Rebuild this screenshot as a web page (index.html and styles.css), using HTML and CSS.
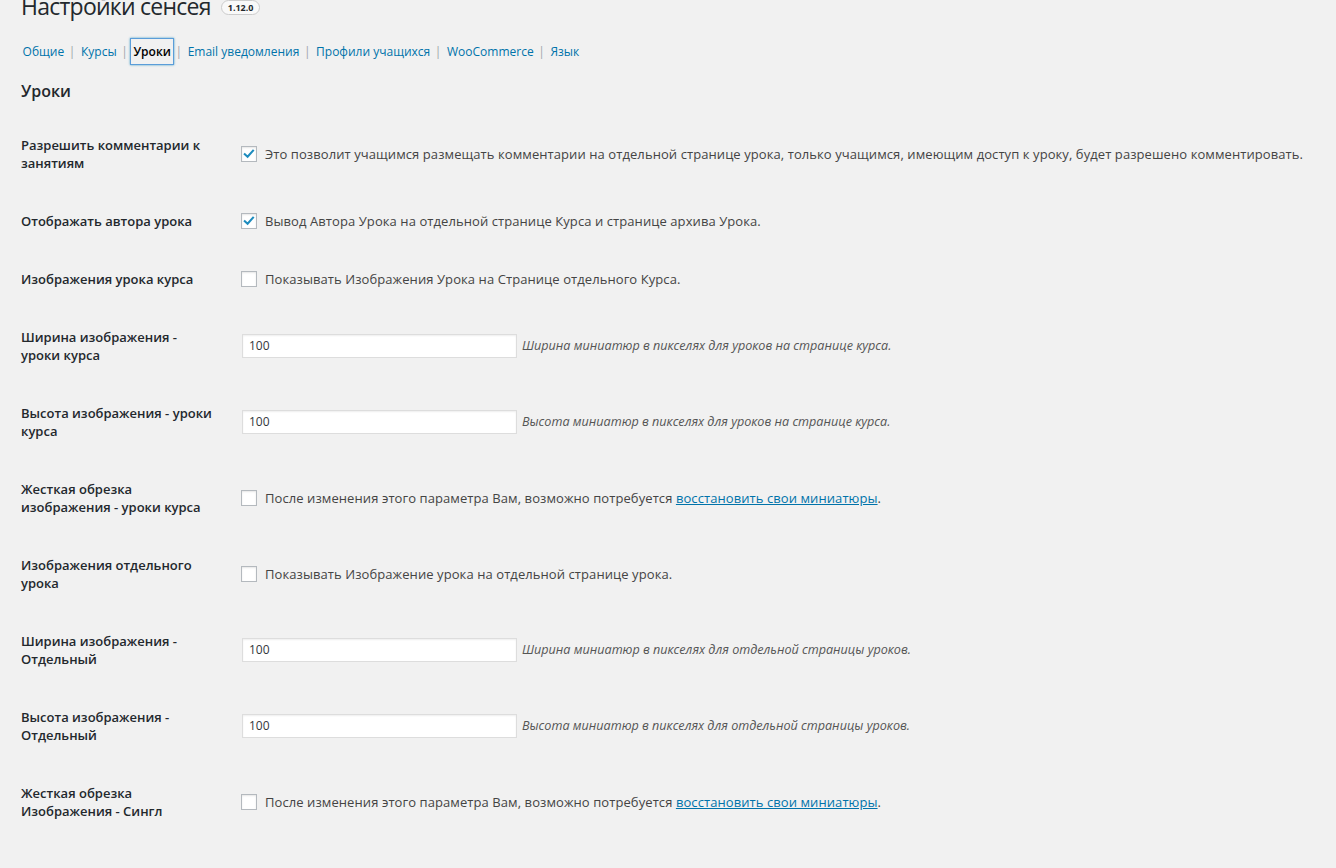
FILE: index.html
```html
<!DOCTYPE html>
<html lang="ru">
<head>
<meta charset="utf-8">
<title>Настройки сенсея</title>
<link rel="stylesheet" href="styles.css">
</head>
<body>
<div class="wrap">
  <h1 class="title">Настройки сенсея <span class="version">1.12.0</span></h1>
  <ul class="tabs">
    <li><a href="#">Общие</a><span class="sep">|</span></li>
    <li><a href="#">Курсы</a><span class="sep">|</span></li>
    <li><a href="#" class="current">Уроки</a><span class="sep">|</span></li>
    <li><a href="#">Email уведомления</a><span class="sep">|</span></li>
    <li><a href="#">Профили учащихся</a><span class="sep">|</span></li>
    <li><a href="#">WooCommerce</a><span class="sep">|</span></li>
    <li><a href="#">Язык</a></li>
  </ul>
  <h2 class="section">Уроки</h2>
  <table class="form-table">
    <tr>
      <th>Разрешить комментарии к<br>занятиям</th>
      <td><label class="check"><span class="cb checked"><svg viewBox="0 0 16 16"><polyline points="3.2,8.2 6.4,11.2 12.6,4.2"/></svg></span>Это позволит учащимся размещать комментарии на отдельной странице урока, только учащимся, имеющим доступ к уроку, будет разрешено комментировать.</label></td>
    </tr>
    <tr>
      <th>Отображать автора урока</th>
      <td><label class="check"><span class="cb checked"><svg viewBox="0 0 16 16"><polyline points="3.2,8.2 6.4,11.2 12.6,4.2"/></svg></span>Вывод Автора Урока на отдельной странице Курса и странице архива Урока.</label></td>
    </tr>
    <tr>
      <th>Изображения урока курса</th>
      <td><label class="check"><span class="cb"></span>Показывать Изображения Урока на Странице отдельного Курса.</label></td>
    </tr>
    <tr>
      <th>Ширина изображения -<br>уроки курса</th>
      <td><div class="field"><span class="input">100</span><span class="desc">Ширина миниатюр в пикселях для уроков на странице курса.</span></div></td>
    </tr>
    <tr>
      <th>Высота изображения - уроки<br>курса</th>
      <td><div class="field"><span class="input">100</span><span class="desc">Высота миниатюр в пикселях для уроков на странице курса.</span></div></td>
    </tr>
    <tr>
      <th>Жесткая обрезка<br>изображения - уроки курса</th>
      <td><label class="check"><span class="cb"></span>После изменения этого параметра Вам, возможно потребуется&nbsp;<a href="#">восстановить свои миниатюры</a>.</label></td>
    </tr>
    <tr>
      <th>Изображения отдельного<br>урока</th>
      <td><label class="check"><span class="cb"></span>Показывать Изображение урока на отдельной странице урока.</label></td>
    </tr>
    <tr>
      <th>Ширина изображения -<br>Отдельный</th>
      <td><div class="field"><span class="input">100</span><span class="desc">Ширина миниатюр в пикселях для отдельной страницы уроков.</span></div></td>
    </tr>
    <tr>
      <th>Высота изображения -<br>Отдельный</th>
      <td><div class="field"><span class="input">100</span><span class="desc">Высота миниатюр в пикселях для отдельной страницы уроков.</span></div></td>
    </tr>
    <tr>
      <th>Жесткая обрезка<br>Изображения - Сингл</th>
      <td><label class="check"><span class="cb"></span>После изменения этого параметра Вам, возможно потребуется&nbsp;<a href="#">восстановить свои миниатюры</a>.</label></td>
    </tr>
  </table>
</div>
</body>
</html>
```

FILE: styles.css
```css
html, body {
  margin: 0;
  padding: 0;
  background: #f1f1f1;
}
body {
  font-family: "Open Sans", "Liberation Sans", sans-serif;
  font-size: 13px;
  color: #444;
  overflow: hidden;
  height: 868px;
}
.wrap {
  padding: 0 20px 0 21px;
}
.title {
  margin: -9px 0 0 0;
  height: 30px;
  line-height: 30px;
  font-size: 23px;
  font-weight: 400;
  letter-spacing: -0.75px;
  color: #23282d;
  display: flex;
  align-items: center;
  gap: 10px;
  white-space: nowrap;
}
.version {
  display: inline-block;
  font-size: 9px;
  font-weight: 700;
  letter-spacing: 0;
  line-height: 13px;
  padding: 0 6px;
  border: 1px solid #ccc;
  border-radius: 8px;
  background: #f9f9f9;
  color: #23282d;
  position: relative;
  top: 1px;
}
.tabs {
  list-style: none;
  margin: 17px 0 0 -1px;
  padding: 0;
  display: flex;
  height: 26px;
  align-items: center;
  white-space: nowrap;
  font-size: 12px;
}
.tabs li {
  display: flex;
  align-items: center;
}
.tabs a {
  color: #0073aa;
  text-decoration: none;
  padding: 3px 2.6px;
  line-height: 19px;
}
.tabs a.current {
  color: #000;
  font-weight: 600;
  box-shadow: 0 0 0 1px #5b9dd9, 0 0 2px 1px rgba(30, 140, 190, 0.8);
}
.sep {
  color: #a0a5aa;
  margin: 0 3px 0 2px;
}
.section {
  margin: 16px 0 0 0;
  font-size: 16px;
  line-height: 22px;
  font-weight: 600;
  color: #23282d;
}
.form-table {
  margin-top: 14px;
  border-collapse: collapse;
  width: 100%;
}
.form-table th {
  width: 199px;
  padding: 20px 10px 20px 0;
  text-align: left;
  vertical-align: top;
  font-weight: 600;
  color: #23282d;
  line-height: 18px;
  white-space: nowrap;
}
.form-table td {
  padding: 15px 10px;
  vertical-align: middle;
  line-height: 18px;
}
.check {
  display: flex;
  align-items: center;
  white-space: nowrap;
  letter-spacing: 0.08px;
}
.check a {
  color: #0073aa;
  text-decoration: underline;
}
.cb {
  flex: none;
  box-sizing: border-box;
  width: 16px;
  height: 16px;
  margin: 0 8px 0 1px;
  border: 1px solid #b4b9be;
  background: #fff;
  box-shadow: inset 0 1px 2px rgba(0, 0, 0, 0.1);
  display: flex;
  align-items: center;
  justify-content: center;
}
.cb svg {
  width: 14px;
  height: 14px;
}
.cb polyline {
  fill: none;
  stroke: #1e8cbe;
  stroke-width: 2.4;
  stroke-linecap: square;
}
.field {
  display: flex;
  align-items: center;
  white-space: nowrap;
}
.input {
  box-sizing: border-box;
  width: 275px;
  height: 24px;
  margin-left: 2px;
  padding: 0 6px;
  border: 1px solid #ddd;
  background: #fff;
  box-shadow: inset 0 1px 2px rgba(0, 0, 0, 0.07);
  color: #32373c;
  font-size: 12px;
  line-height: 22px;
}
.desc {
  margin-left: 5px;
  font-style: italic;
  font-size: 12.6px;
  color: #555;
}
```
